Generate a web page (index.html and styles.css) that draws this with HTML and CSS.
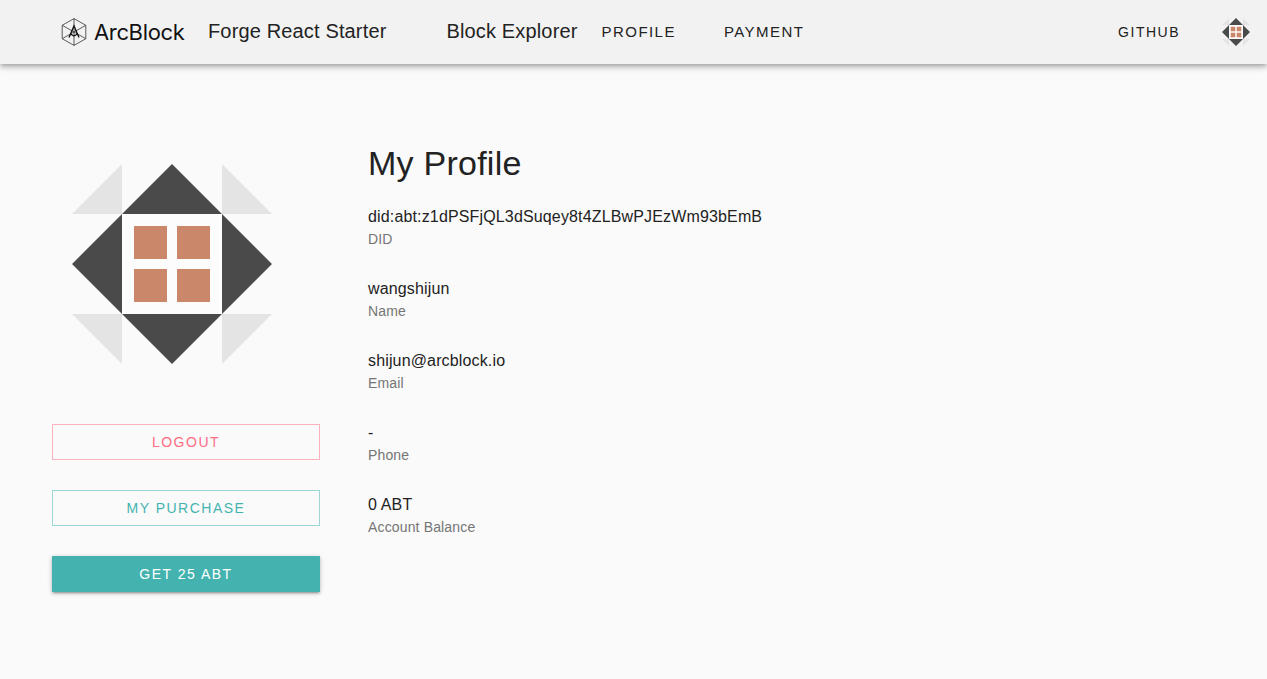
FILE: index.html
```html
<!DOCTYPE html>
<html lang="en">
<head>
<meta charset="utf-8">
<title>Forge React Starter</title>
<link rel="stylesheet" href="styles.css">
</head>
<body>
<svg width="0" height="0" class="defs">
  <symbol id="avatar" viewBox="0 0 200 200">
    <path class="avatar-corner" d="M0 50L50 0V50ZM150 0L200 50H150ZM0 150H50V200ZM150 150H200L150 200Z"/>
    <path class="avatar-side" d="M50 50L100 0L150 50ZM150 50L200 100L150 150ZM50 150H150L100 200ZM50 50V150L0 100Z"/>
    <path class="avatar-center" d="M50 50H150V150H50Z"/>
    <path class="avatar-tile" d="M62 62H95V95H62ZM105 62H138V95H105ZM62 105H95V138H62ZM105 105H138V138H105Z"/>
  </symbol>
</svg>
<header class="header">
  <a class="brand">
    <svg class="brand-mark" viewBox="0 0 26 28">
      <path d="M13 .6L24.8 7.3V20.7L13 27.4L1.2 20.7V7.3ZM13 .6V27.4M1.2 7.3L24.8 20.7M24.8 7.3L1.2 20.7"/>
      <path class="brand-mark-a" d="M8 19.5L13 8L18 19.5M9.5 16L13 18L16.5 16"/>
    </svg>
    <span class="brand-name">ArcBlock</span>
  </a>
  <span class="title">Forge React Starter</span>
  <nav class="nav">
    <a class="title">Block Explorer</a>
    <a class="nav-link profile">Profile</a>
    <a class="nav-link payment">Payment</a>
  </nav>
  <a class="nav-link github">GitHub</a>
  <svg class="avatar-small"><use href="#avatar"/></svg>
</header>
<main class="main">
  <aside class="sidebar">
    <svg class="avatar"><use href="#avatar"/></svg>
    <button class="button logout">Logout</button>
    <button class="button purchase">My Purchase</button>
    <button class="button get">Get 25 ABT</button>
  </aside>
  <section class="content">
    <h1 class="heading">My Profile</h1>
    <dl class="list">
      <div class="item"><dd class="value">did:abt:z1dPSFjQL3dSuqey8t4ZLBwPJEzWm93bEmB</dd><dt class="label">DID</dt></div>
      <div class="item"><dd class="value">wangshijun</dd><dt class="label">Name</dt></div>
      <div class="item"><dd class="value">shijun@arcblock.io</dd><dt class="label">Email</dt></div>
      <div class="item"><dd class="value">-</dd><dt class="label">Phone</dt></div>
      <div class="item"><dd class="value">0 ABT</dd><dt class="label">Account Balance</dt></div>
    </dl>
  </section>
</main>
</body>
</html>
```
FILE: styles.css
```css
* { box-sizing: border-box; }
body {
  margin: 0;
  min-height: 679px;
  background: #fafafa;
  color: #222;
  font-family: "Liberation Sans", Helvetica, Arial, sans-serif;
}
.defs { display: block; }
.avatar-corner { fill: #e4e4e4; }
.avatar-side { fill: #4a4a4a; }
.avatar-center { fill: #fdfcfd; }
.avatar-tile { fill: #ca8769; }

.header {
  display: flex;
  align-items: center;
  height: 64px;
  padding: 0 17px 0 61px;
  background: #f2f2f2;
  box-shadow: 0 2px 4px -1px rgba(0,0,0,.2), 0 4px 5px 0 rgba(0,0,0,.14), 0 1px 10px 0 rgba(0,0,0,.12);
  white-space: nowrap;
}
.brand { display: flex; align-items: center; width: 147px; }
.brand-mark { flex: none; width: 26px; height: 28px; fill: none; stroke: #333; stroke-width: .8; }
.brand-mark-a { stroke: #111; stroke-width: 1.3; }
.brand-name { margin-left: 7px; font-family: Inter, sans-serif; font-size: 22px; line-height: 28px; letter-spacing: -.35px; color: #111; }
.title { padding-bottom: 2px; font-size: 20px; line-height: 32px; letter-spacing: .15px; }
.nav { display: flex; align-items: center; margin-left: 60px; }
.nav-link { font-size: 15px; line-height: 24px; letter-spacing: 1.45px; text-transform: uppercase; }
.profile { margin-left: 24px; }
.payment { margin-left: 48px; }
.github { margin-left: auto; font-size: 14px; letter-spacing: 1.5px; }
.avatar-small { width: 28px; height: 28px; margin-left: 42px; }

.main { display: flex; gap: 48px; padding: 80px 52px 0; }
.sidebar { display: flex; flex-direction: column; width: 268px; padding-top: 20px; }
.avatar { width: 200px; height: 200px; margin: 0 0 60px 20px; }
.button {
  height: 36px;
  margin: 0 0 30px;
  padding: 0;
  border: 1px solid;
  background: transparent;
  font: 14px/24px "Liberation Sans", Helvetica, Arial, sans-serif;
  letter-spacing: 1.5px;
  text-transform: uppercase;
}
.logout { color: #ff6e82; border-color: #fbb2bc; }
.purchase { color: #44b3b0; border-color: #9ed6d5; }
.get {
  border: 0;
  color: #fff;
  background: #44b3b0;
  box-shadow: 0 1px 5px rgba(0,0,0,.2), 0 2px 2px rgba(0,0,0,.14), 0 3px 1px -2px rgba(0,0,0,.12);
}
.heading { margin: 0; font-size: 34px; font-weight: 400; line-height: 39px; letter-spacing: .25px; }
.list { margin: 22px 0 0; }
.item { height: 72px; }
.value { margin: 0; font-size: 16px; line-height: 24px; letter-spacing: .15px; }
.label { font-size: 14px; line-height: 20px; letter-spacing: .15px; color: #757575; }
```
